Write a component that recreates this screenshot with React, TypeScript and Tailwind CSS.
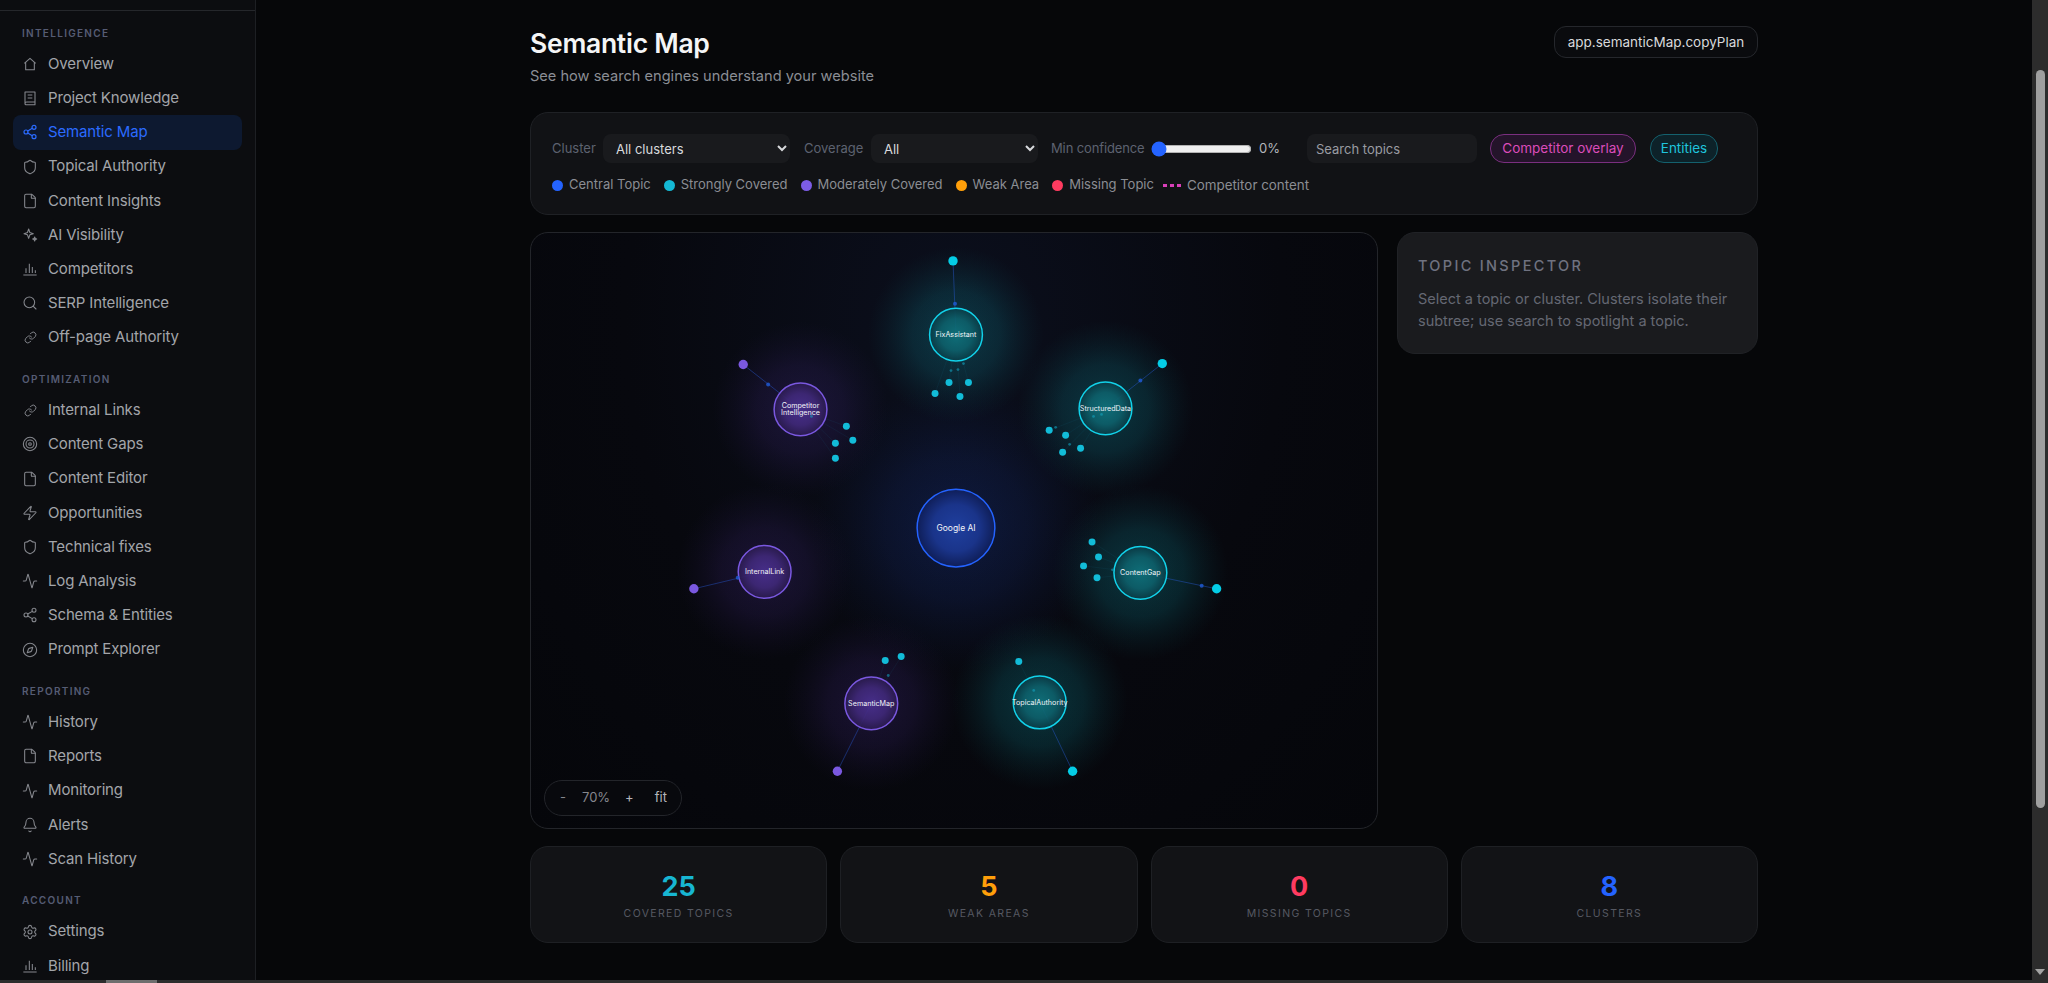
import type { ReactNode } from "react";
import { Activity, Bell, Compass, File, Link, Search, Settings, Share2, Shield, Target, Zap } from "lucide-react";

const iconClass = "h-[16px] w-[16px] shrink-0";
const linkClass = "mx-[1.500px] h-[13px] w-[13px] shrink-0";

function HouseIcon() {
  return (
    <svg viewBox="0 0 24 24" fill="none" stroke="currentColor" strokeWidth={1.6} strokeLinejoin="round" className={iconClass}>
      <path d="M3.5 11 12 3.5l8.500 7.500M5.500 9.500V20.500h13V9.500" />
    </svg>
  );
}

function NotesIcon() {
  return (
    <svg viewBox="0 0 24 24" fill="none" stroke="currentColor" strokeWidth={1.6} strokeLinejoin="round" className={iconClass}>
      <path d="M4.500 3h15v15H7a2.500 2.500 0 0 0-2.500 2.500zM4.500 20.500A1.500 1.500 0 0 0 6 22h13.500V18M8.500 7.500h7M8.500 12h7" />
    </svg>
  );
}

function BarsIcon() {
  return (
    <svg viewBox="0 0 24 24" fill="none" stroke="currentColor" strokeWidth={1.6} className={iconClass}>
      <path d="M2 21h20M6 18v-7M11 18V4M15.500 18v-9M20 18v-4" />
    </svg>
  );
}

function SparkIcon() {
  return (
    <svg viewBox="0 0 24 24" fill="none" stroke="currentColor" strokeWidth={1.6} strokeLinejoin="round" className={iconClass}>
      <path d="m10 3 1.800 5.200L17 10l-5.200 1.800L10 17l-1.800-5.200L3 10l5.200-1.800z" />
      <path d="m19 15 .9 2.100L22 18l-2.100.9L19 21l-.9-2.100L16 18l2.100-.9z" fill="currentColor" />
    </svg>
  );
}

type NavItem = { label: string; icon: ReactNode; active?: boolean };

const nav: { title: string; items: NavItem[] }[] = [
  {
    title: "INTELLIGENCE",
    items: [
      { label: "Overview", icon: <HouseIcon /> },
      { label: "Project Knowledge", icon: <NotesIcon /> },
      { label: "Semantic Map", icon: <Share2 className={iconClass} strokeWidth={1.8} />, active: true },
      { label: "Topical Authority", icon: <Shield className={iconClass} strokeWidth={1.6} /> },
      { label: "Content Insights", icon: <File className={iconClass} strokeWidth={1.6} /> },
      { label: "AI Visibility", icon: <SparkIcon /> },
      { label: "Competitors", icon: <BarsIcon /> },
      { label: "SERP Intelligence", icon: <Search className={iconClass} strokeWidth={1.6} /> },
      { label: "Off-page Authority", icon: <Link className={linkClass} strokeWidth={1.8} /> },
    ],
  },
  {
    title: "OPTIMIZATION",
    items: [
      { label: "Internal Links", icon: <Link className={linkClass} strokeWidth={1.8} /> },
      { label: "Content Gaps", icon: <Target className={iconClass} strokeWidth={1.6} /> },
      { label: "Content Editor", icon: <File className={iconClass} strokeWidth={1.6} /> },
      { label: "Opportunities", icon: <Zap className={iconClass} strokeWidth={1.6} /> },
      { label: "Technical fixes", icon: <Shield className={iconClass} strokeWidth={1.6} /> },
      { label: "Log Analysis", icon: <Activity className={iconClass} strokeWidth={1.6} /> },
      { label: "Schema & Entities", icon: <Share2 className={iconClass} strokeWidth={1.6} /> },
      { label: "Prompt Explorer", icon: <Compass className={iconClass} strokeWidth={1.6} /> },
    ],
  },
  {
    title: "REPORTING",
    items: [
      { label: "History", icon: <Activity className={iconClass} strokeWidth={1.6} /> },
      { label: "Reports", icon: <File className={iconClass} strokeWidth={1.6} /> },
      { label: "Monitoring", icon: <Activity className={iconClass} strokeWidth={1.6} /> },
      { label: "Alerts", icon: <Bell className={iconClass} strokeWidth={1.6} /> },
      { label: "Scan History", icon: <Activity className={iconClass} strokeWidth={1.6} /> },
    ],
  },
  {
    title: "ACCOUNT",
    items: [
      { label: "Settings", icon: <Settings className={iconClass} strokeWidth={1.6} /> },
      { label: "Billing", icon: <BarsIcon /> },
    ],
  },
];

const legend = [
  { label: "Central Topic", dot: "bg-[#2463ff]" },
  { label: "Strongly Covered", dot: "bg-[#14b8d4]" },
  { label: "Moderately Covered", dot: "bg-[#7c5ce6]" },
  { label: "Weak Area", dot: "bg-[#ff9f0a]" },
  { label: "Missing Topic", dot: "bg-[#ff3b60]" },
];

const stats = [
  { value: "25", label: "COVERED TOPICS", color: "text-[#17b6d2]" },
  { value: "5", label: "WEAK AREAS", color: "text-[#ff9f0a]" },
  { value: "0", label: "MISSING TOPICS", color: "text-[#ff3b60]" },
  { value: "8", label: "CLUSTERS", color: "text-[#2463ff]" },
];

type Pt = [number, number];
type Cluster = {
  x: number;
  y: number;
  kind: "teal" | "purple";
  lines: string[];
  big: Pt;
  mid?: Pt;
  leaves: Pt[];
  tiny: Pt[];
};

const clusters: Cluster[] = [
  {
    x: 956, y: 334, kind: "teal", lines: ["FixAssistant"], big: [953, 260], mid: [955, 303],
    leaves: [[949, 382], [968.500, 382], [935, 393], [960, 396]],
    tiny: [[951, 370], [958, 369], [963.500, 363]],
  },
  {
    x: 800, y: 409, kind: "purple", lines: ["Competitor", "Intelligence"], big: [742.500, 364], mid: [767.500, 384],
    leaves: [[846, 426], [852.500, 440], [835, 443], [835, 458]],
    tiny: [[811, 416]],
  },
  {
    x: 1106, y: 408, kind: "teal", lines: ["StructuredData"], big: [1163, 363], mid: [1141, 380],
    leaves: [[1049.500, 430], [1066, 435], [1081, 448], [1063, 452]],
    tiny: [[1056, 427], [1070, 444], [1094, 416], [1102, 414]],
  },
  {
    x: 764, y: 572, kind: "purple", lines: ["InternalLink"], big: [693, 589], mid: [737, 578],
    leaves: [],
    tiny: [],
  },
  {
    x: 1141, y: 573, kind: "teal", lines: ["ContentGap"], big: [1217.500, 589], mid: [1202.500, 586],
    leaves: [[1092.500, 542], [1099, 557], [1084, 566], [1097.500, 578]],
    tiny: [[1113, 570]],
  },
  {
    x: 871, y: 704, kind: "purple", lines: ["SemanticMap"], big: [837, 772],
    leaves: [[885, 661], [901, 657]],
    tiny: [[888, 676]],
  },
  {
    x: 1040, y: 703, kind: "teal", lines: ["TopicalAuthority"], big: [1073, 772],
    leaves: [[1019, 662]],
    tiny: [[1034, 691]],
  },
];

function SemanticGraph() {
  return (
    <svg viewBox="530 232 848 597" className="block h-full w-full">
      <defs>
        <radialGradient id="glowTeal">
          <stop offset="0%" stopColor="#0f9aa6" stopOpacity={0.3} />
          <stop offset="50%" stopColor="#0d8a96" stopOpacity={0.21} />
          <stop offset="100%" stopColor="#0a5c64" stopOpacity={0} />
        </radialGradient>
        <radialGradient id="glowPurple">
          <stop offset="0%" stopColor="#5232a0" stopOpacity={0.26} />
          <stop offset="50%" stopColor="#452a86" stopOpacity={0.19} />
          <stop offset="100%" stopColor="#2e1c5e" stopOpacity={0} />
        </radialGradient>
        <radialGradient id="glowBlue">
          <stop offset="0%" stopColor="#1d44b8" stopOpacity={0.26} />
          <stop offset="50%" stopColor="#1a3a9e" stopOpacity={0.16} />
          <stop offset="100%" stopColor="#0e2060" stopOpacity={0} />
        </radialGradient>
        <radialGradient id="fillTeal">
          <stop offset="0%" stopColor="#0f727c" />
          <stop offset="60%" stopColor="#0d5f6a" />
          <stop offset="100%" stopColor="#0a3b46" />
        </radialGradient>
        <radialGradient id="fillPurple">
          <stop offset="0%" stopColor="#4a3090" />
          <stop offset="60%" stopColor="#3f2878" />
          <stop offset="100%" stopColor="#2a1b4e" />
        </radialGradient>
        <radialGradient id="fillBlue">
          <stop offset="0%" stopColor="#1f3f9e" />
          <stop offset="60%" stopColor="#1a348a" />
          <stop offset="100%" stopColor="#0f1e58" />
        </radialGradient>
      </defs>

      <circle cx={956} cy={528} r={145} fill="url(#glowBlue)" />
      {clusters.map((c) => (
        <circle
          key={`glow-${c.x}`}
          cx={c.x}
          cy={c.y}
          r={88}
          fill={c.kind === "teal" ? "url(#glowTeal)" : "url(#glowPurple)"}
        />
      ))}

      {clusters.map((c) => (
        <g key={`edges-${c.x}`}>
          <line x1={c.x} y1={c.y} x2={c.big[0]} y2={c.big[1]} stroke="#2a5fe0" strokeOpacity={0.42} strokeWidth={1} />
          {c.leaves.map((p) => (
            <line key={p.join()} x1={c.x} y1={c.y} x2={p[0]} y2={p[1]} stroke="#1c8fb0" strokeOpacity={0.1} strokeWidth={0.8} />
          ))}
        </g>
      ))}

      {clusters.map((c) => (
        <g key={`node-${c.x}`}>
          <circle
            cx={c.x}
            cy={c.y}
            r={26.500}
            fill={c.kind === "teal" ? "url(#fillTeal)" : "url(#fillPurple)"}
            fillOpacity={0.92}
            stroke={c.kind === "teal" ? "#12d2ea" : "#7a58e0"}
            strokeWidth={1.500}
          />
          {c.mid && <circle cx={c.mid[0]} cy={c.mid[1]} r={2} fill="#1f5bd8" fillOpacity={0.8} />}
          {c.tiny.map((p) => (
            <circle key={p.join()} cx={p[0]} cy={p[1]} r={1.400} fill="#14a8c4" fillOpacity={0.55} />
          ))}
          {c.leaves.map((p) => (
            <circle key={p.join()} cx={p[0]} cy={p[1]} r={3.500} fill="#12bcd8" />
          ))}
          <circle cx={c.big[0]} cy={c.big[1]} r={4.700} fill={c.kind === "teal" ? "#04cde6" : "#7a58e0"} />
          {c.lines.map((line, i) => (
            <text
              key={line}
              x={c.x}
              y={c.y + 2.500 + (i - (c.lines.length - 1) / 2) * 7}
              textAnchor="middle"
              fontSize={7.200}
              fill="#f2f4f8"
              fontFamily="Inter, sans-serif"
            >
              {line}
            </text>
          ))}
        </g>
      ))}

      <circle cx={956} cy={528} r={39} fill="url(#fillBlue)" stroke="#2463ff" strokeWidth={1.500} />
      <text x={956} y={531} textAnchor="middle" fontSize={8.500} fill="#f2f4f8" fontFamily="Inter, sans-serif">
        Google AI
      </text>
    </svg>
  );
}

export default function App() {
  return (
    <div className="flex h-screen w-full flex-col overflow-hidden bg-[#060709] font-['Inter','Liberation_Sans',sans-serif]">
      <div className="flex min-h-0 flex-1">
        <aside className="h-full w-[256px] shrink-0 overflow-hidden border-r border-[#1d1f23] bg-[#0c0d10]">
          <div className="h-[11px] border-b border-[#25272b]" />
          <nav className="px-[13px] pt-[14.500px]">
            {nav.map((section, index) => (
              <div key={section.title} className={index > 0 ? "mt-[17px]" : ""}>
                <p className="mb-[7.500px] h-[14px] pl-[9px] text-[10px] leading-[14px] font-semibold tracking-[0.13em] text-[#565c74]">
                  {section.title}
                </p>
                {section.items.map((item) => (
                  <div
                    key={item.label}
                    className={`flex h-[34.2px] items-center gap-[10px] rounded-lg px-[9px] text-[15px] tracking-[-0.01em] ${
                      item.active ? "bg-[#0d1930] text-[#2b6bff]" : "text-[#a3a5aa]"
                    }`}
                  >
                    <span className={item.active ? "text-[#2b6bff]" : "text-[#85878d]"}>{item.icon}</span>
                    {item.label}
                  </div>
                ))}
              </div>
            ))}
          </nav>
        </aside>

        <main className="min-w-0 flex-1">
          <div className="mx-auto w-[1228px] pt-[26px]">
            <div className="flex items-start justify-between">
              <div>
                <h1 className="h-[34px] text-[26.500px] leading-[34px] font-semibold tracking-[-0.01em] text-[#f4f5f6]">
                  Semantic Map
                </h1>
                <p className="mt-[4px] h-[24px] text-[14.600px] leading-[24px] text-[#8b8e95]">
                  See how search engines understand your website
                </p>
              </div>
              <button className="h-[32px] w-[204px] rounded-[12px] border border-[#25272c] bg-[#0a0b0e] text-[13.500px] text-[#d8d9dc]">
                app.semanticMap.copyPlan
              </button>
            </div>

            <section className="mt-[24px] h-[103px] rounded-[18px] border border-[#1f2125] bg-[#111215] px-[21px] pt-[21px]">
              <div className="flex h-[29px] items-center">
                <span className="w-[44px] text-[13px] text-[#5d6270]">Cluster</span>
                <select className="ml-[7px] h-[29px] w-[187px] rounded-lg bg-[#191a1d] pl-[9px] text-[13px] text-[#d8dadd] outline-none [color-scheme:dark]">
                  <option>All clusters</option>
                </select>
                <span className="ml-[14px] w-[60px] text-[13px] text-[#5d6270]">Coverage</span>
                <select className="ml-[7px] h-[29px] w-[167px] rounded-lg bg-[#191a1d] pl-[9px] text-[13px] text-[#d8dadd] outline-none [color-scheme:dark]">
                  <option>All</option>
                </select>
                <span className="ml-[13px] w-[93px] text-[13px] tracking-[-0.01em] whitespace-nowrap text-[#5d6270]">
                  Min confidence
                </span>
                <input type="range" min={0} max={100} defaultValue={0} className="ml-[7px] w-[101px] accent-[#2463ff]" />
                <span className="ml-[7px] w-[22px] text-[13px] text-[#b4b6bb]">0%</span>
                <input
                  placeholder="Search topics"
                  className="ml-[26px] h-[29px] w-[170px] rounded-lg bg-[#191a1d] px-[9px] text-[13px] text-[#d8dadd] outline-none placeholder:text-[#9a9ca2]"
                />
                <button className="ml-[13px] h-[29px] w-[146px] rounded-[14px] border border-[#7a2f7f] bg-[#24142a] text-[13.500px] text-[#dc4cba]">
                  Competitor overlay
                </button>
                <button className="ml-[14px] h-[29px] w-[68px] rounded-[14px] border border-[#14616e] bg-[#0d2229] text-[13.500px] text-[#1fc4dc]">
                  Entities
                </button>
              </div>
              <div className="mt-[13px] flex h-[18px] items-center gap-[13px] text-[13px] text-[#8b8d93]">
                {legend.map((entry) => (
                  <span key={entry.label} className="flex items-center gap-[6px]">
                    <span className={`h-[11px] w-[11px] rounded-full ${entry.dot}`} />
                    {entry.label}
                  </span>
                ))}
                <span className="-ml-[4px] flex items-center gap-[6px] text-[13.400px]">
                  <span className="flex w-[18px] justify-between">
                    <span className="h-[3px] w-[4px] bg-[#d93fb8]" />
                    <span className="h-[3px] w-[4px] bg-[#d93fb8]" />
                    <span className="h-[3px] w-[4px] bg-[#d93fb8]" />
                  </span>
                  Competitor content
                </span>
              </div>
            </section>

            <div className="mt-[17px] grid grid-cols-[848px_1fr] items-start gap-[19px]">
              <div className="relative h-[597px] overflow-hidden rounded-[18px] border border-[#23252a] bg-[radial-gradient(ellipse_at_50%_15%,#0b0f1d_0%,#07080e_55%,#05060a_100%)]">
                <SemanticGraph />
                <div className="absolute bottom-[12px] left-[13px] flex h-[36px] w-[138px] items-center rounded-[18px] border border-[#23252a] bg-[#08090d] text-[13px] text-[#85878d]">
                  <span className="ml-[15px]">-</span>
                  <span className="ml-[16px]">70%</span>
                  <span className="ml-[15px] text-[#b4b6bb]">+</span>
                  <span className="ml-[21px] text-[#b4b6bb]">fit</span>
                </div>
              </div>
              <aside className="h-[122px] rounded-[18px] border border-[#202226] bg-[#1a1b1e] pt-[22px] pr-[21px] pl-[20px]">
                <h2 className="text-[14.500px] leading-[22px] font-medium tracking-[0.16em] text-[#6f7280]">
                  TOPIC INSPECTOR
                </h2>
                <p className="mt-[11px] text-[14.500px] leading-[22px] text-[#656873]">
                  Select a topic or cluster. Clusters isolate their subtree; use search to spotlight a topic.
                </p>
              </aside>
            </div>

            <div className="mt-[17px] grid grid-cols-4 gap-[13px]">
              {stats.map((stat) => (
                <div
                  key={stat.label}
                  className="flex h-[97px] flex-col items-center rounded-[18px] border border-[#1e2024] bg-[#121316] pt-[24px]"
                >
                  <span className={`text-[27px] leading-[32px] font-bold ${stat.color}`}>{stat.value}</span>
                  <span className="mt-[4px] text-[10.500px] leading-[14px] tracking-[0.13em] text-[#565962]">
                    {stat.label}
                  </span>
                </div>
              ))}
            </div>
          </div>
        </main>

        <div className="relative w-[16px] shrink-0 bg-[#2c2c2c]">
          <div className="mx-auto mt-[70px] h-[738px] w-[9px] rounded-full bg-[#9f9f9f]" />
          <svg viewBox="0 0 10 6" className="absolute bottom-[5px] left-[3px] h-[6px] w-[10px]">
            <polygon points="0,0 10,0 5,6" fill="#a3a3a3" />
          </svg>
        </div>
      </div>
      <div className="h-[3px] shrink-0 bg-[#2c2c2c]">
        <div className="ml-[106px] h-full w-[51px] bg-[#6e6e6e]" />
      </div>
    </div>
  );
}
